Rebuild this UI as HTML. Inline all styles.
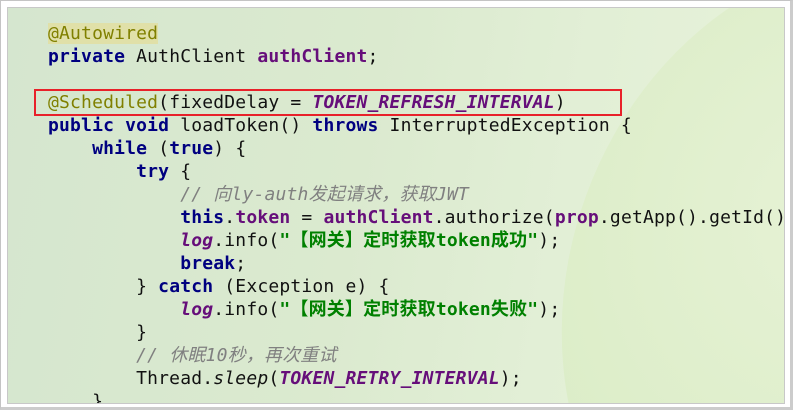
<!DOCTYPE html><html><head><meta charset="utf-8"><style>
html,body{margin:0;width:797px;height:414px;background:#fff;overflow:hidden;position:relative}
.outer{position:absolute;left:0;top:0;width:789px;height:406px;border:1px solid #c4c4c4;border-right:3px solid #ccc;border-bottom:3px solid #ccc;background:#fff}
.img{position:absolute;left:7px;top:7px;width:776px;height:395px;border:1px solid #c8c8c8;overflow:hidden;
background:linear-gradient(100deg,#d5e6cf 0%,#dbeacf 45%,#e2efd6 70%,#e8f3da 100%)}
.leaf{position:absolute;left:560px;top:-60px;width:600px;height:700px;border-radius:50%;background:radial-gradient(ellipse at 40% 40%,#e6f2d5,#dcedc8 60%,#d2e6bd);transform:rotate(20deg)}
pre{position:absolute;left:40px;top:14px;margin:0;font:18px/23px "DejaVu Sans Mono","Noto Sans CJK SC",monospace;letter-spacing:0.18px;color:#111}
.k{color:#000080;font-weight:bold}.a{color:#808000}.f{color:#660e7a;font-weight:bold}.c{color:#808080;font-style:italic}
.s{color:#008000;font-weight:bold}.i{color:#660e7a;font-weight:bold;font-style:italic}.si{font-style:italic}
.hl{background:#e0e0a8}
.box{position:absolute;left:26px;top:81px;width:584px;height:23px;border:2px solid #e8212a}
</style></head><body><div class="outer"></div><div class="img"><div class="leaf"></div>
<pre><span class="a hl">@Autowired</span>
<span class="k">private</span> AuthClient <span class="f">authClient</span>;

<span class="a">@Scheduled</span>(fixedDelay = <span class="i">TOKEN_REFRESH_INTERVAL</span>)
<span class="k">public void</span> loadToken() <span class="k">throws</span> InterruptedException {
    <span class="k">while</span> (<span class="k">true</span>) {
        <span class="k">try</span> {
            <span class="c">// 向ly-auth发起请求，获取JWT</span>
            <span class="k">this</span>.<span class="f">token</span> = <span class="f">authClient</span>.authorize(<span class="f">prop</span>.getApp().getId()
            <span class="i">log</span>.info(<span class="s">"【网关】定时获取token成功"</span>);
            <span class="k">break</span>;
        } <span class="k">catch</span> (Exception e) {
            <span class="i">log</span>.info(<span class="s">"【网关】定时获取token失败"</span>);
        }
        <span class="c">// 休眠10秒，再次重试</span>
        Thread.<span class="si">sleep</span>(<span class="i">TOKEN_RETRY_INTERVAL</span>);
    }</pre>
<div class="box"></div></div></body></html>
